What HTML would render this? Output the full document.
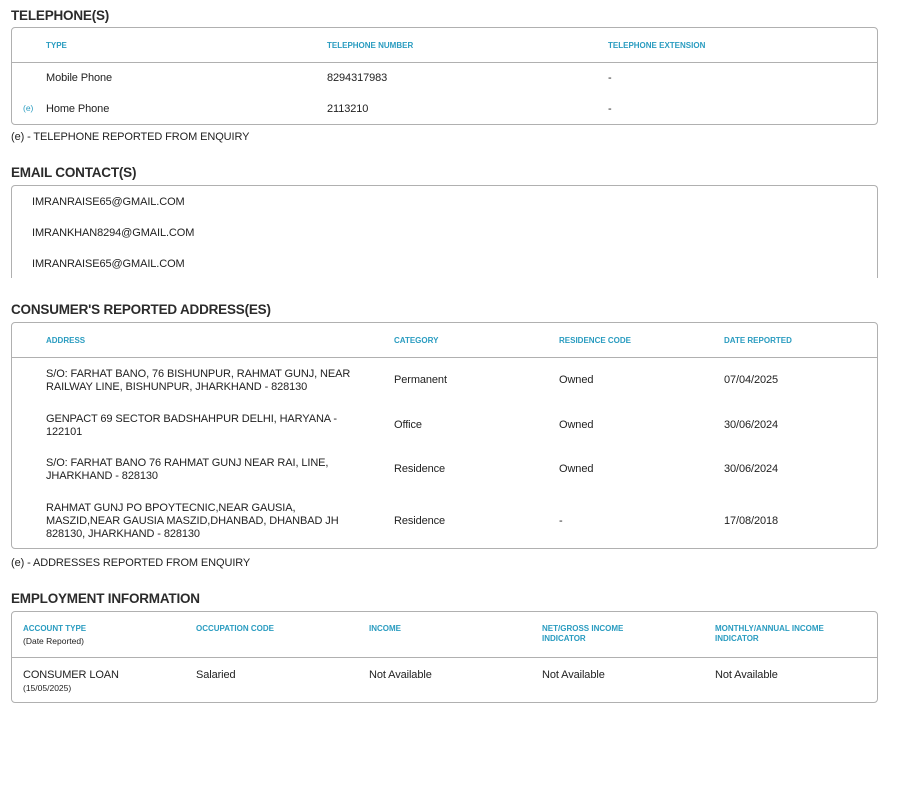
<!DOCTYPE html>
<html><head><style>
body{margin:0;width:913px;height:797px;background:#fff;font-family:"Liberation Sans",sans-serif;color:#222;position:relative;overflow:hidden}
.a{position:absolute;white-space:nowrap}
.h{font-size:13.5px;font-weight:bold;color:#2b2b2b;left:11px;margin-top:1px;letter-spacing:-0.2px}
.box{position:absolute;left:11px;width:865px;border:1px solid #b0b0b0;border-radius:4px}
.ln{position:absolute;left:0;right:0;height:1px;background:#b0b0b0}
.th{font-size:8px;font-weight:bold;color:#2a9cc0;line-height:10px;margin-top:1px}
.t{font-size:11px;line-height:13px;margin-top:2px;letter-spacing:-0.1px}
.s{font-size:8.5px;margin-top:1px}
</style></head><body>
<div class="a h" style="top:7px">TELEPHONE(S)</div>
<div class="box" style="top:27px;height:96px"><div class="ln" style="top:34px"></div></div>
<div class="a th" style="left:46px;top:40px">TYPE</div>
<div class="a th" style="left:327px;top:40px">TELEPHONE NUMBER</div>
<div class="a th" style="left:608px;top:40px">TELEPHONE EXTENSION</div>
<div class="a t" style="left:46px;top:70px">Mobile Phone</div>
<div class="a t" style="left:327px;top:70px">8294317983</div>
<div class="a t" style="left:608px;top:70px">-</div>
<div class="a s" style="left:23px;top:102px;color:#2a9cc0">(e)</div>
<div class="a t" style="left:46px;top:101px">Home Phone</div>
<div class="a t" style="left:327px;top:101px">2113210</div>
<div class="a t" style="left:608px;top:101px">-</div>
<div class="a t" style="left:11px;top:129px">(e) - TELEPHONE REPORTED FROM ENQUIRY</div>

<div class="a h" style="top:164px">EMAIL CONTACT(S)</div>
<div class="box" style="top:185px;height:100px;border-bottom:none"></div>
<div style="position:absolute;left:0;top:278px;width:913px;height:10px;background:#fff"></div>
<div class="a t" style="left:32px;top:194px">IMRANRAISE65@GMAIL.COM</div>
<div class="a t" style="left:32px;top:225px">IMRANKHAN8294@GMAIL.COM</div>
<div class="a t" style="left:32px;top:256px">IMRANRAISE65@GMAIL.COM</div>

<div class="a h" style="top:301px">CONSUMER'S REPORTED ADDRESS(ES)</div>
<div class="box" style="top:322px;height:225px"><div class="ln" style="top:34px"></div></div>
<div class="a th" style="left:46px;top:335px">ADDRESS</div>
<div class="a th" style="left:394px;top:335px">CATEGORY</div>
<div class="a th" style="left:559px;top:335px">RESIDENCE CODE</div>
<div class="a th" style="left:724px;top:335px">DATE REPORTED</div>
<div class="a t" style="left:46px;top:366px">S/O: FARHAT BANO, 76 BISHUNPUR, RAHMAT GUNJ, NEAR<br>RAILWAY LINE, BISHUNPUR, JHARKHAND - 828130</div>
<div class="a t" style="left:394px;top:372px">Permanent</div><div class="a t" style="left:559px;top:372px">Owned</div><div class="a t" style="left:724px;top:372px">07/04/2025</div>
<div class="a t" style="left:46px;top:411px">GENPACT 69 SECTOR BADSHAHPUR DELHI, HARYANA -<br>122101</div>
<div class="a t" style="left:394px;top:417px">Office</div><div class="a t" style="left:559px;top:417px">Owned</div><div class="a t" style="left:724px;top:417px">30/06/2024</div>
<div class="a t" style="left:46px;top:455px">S/O: FARHAT BANO 76 RAHMAT GUNJ NEAR RAI, LINE,<br>JHARKHAND - 828130</div>
<div class="a t" style="left:394px;top:461px">Residence</div><div class="a t" style="left:559px;top:461px">Owned</div><div class="a t" style="left:724px;top:461px">30/06/2024</div>
<div class="a t" style="left:46px;top:500px">RAHMAT GUNJ PO BPOYTECNIC,NEAR GAUSIA,<br>MASZID,NEAR GAUSIA MASZID,DHANBAD, DHANBAD JH<br>828130, JHARKHAND - 828130</div>
<div class="a t" style="left:394px;top:513px">Residence</div><div class="a t" style="left:559px;top:513px">-</div><div class="a t" style="left:724px;top:513px">17/08/2018</div>
<div class="a t" style="left:11px;top:555px">(e) - ADDRESSES REPORTED FROM ENQUIRY</div>

<div class="a h" style="top:590px">EMPLOYMENT INFORMATION</div>
<div class="box" style="top:611px;height:90px"><div class="ln" style="top:45px"></div></div>
<div class="a th" style="left:23px;top:623px">ACCOUNT TYPE</div>
<div class="a s" style="left:23px;top:635px">(Date Reported)</div>
<div class="a th" style="left:196px;top:623px">OCCUPATION CODE</div>
<div class="a th" style="left:369px;top:623px">INCOME</div>
<div class="a th" style="left:542px;top:623px">NET/GROSS INCOME<br>INDICATOR</div>
<div class="a th" style="left:715px;top:623px">MONTHLY/ANNUAL INCOME<br>INDICATOR</div>
<div class="a t" style="left:23px;top:667px">CONSUMER LOAN</div>
<div class="a s" style="left:23px;top:682px">(15/05/2025)</div>
<div class="a t" style="left:196px;top:667px">Salaried</div>
<div class="a t" style="left:369px;top:667px">Not Available</div>
<div class="a t" style="left:542px;top:667px">Not Available</div>
<div class="a t" style="left:715px;top:667px">Not Available</div>
</body></html>
